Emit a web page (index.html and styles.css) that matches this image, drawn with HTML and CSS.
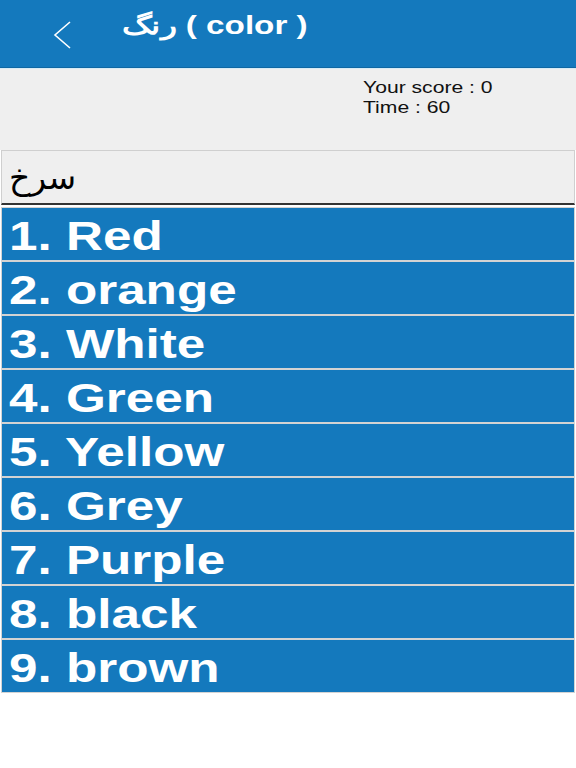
FILE: index.html
```html
<!DOCTYPE html>
<html>
<head>
<meta charset="utf-8">
<link rel="stylesheet" href="styles.css">
</head>
<body>
<div class="header">
  <svg class="back" width="24" height="32" viewBox="0 0 24 32"><polyline points="19,2 4,15 19,28" fill="none" stroke="#fff" stroke-width="1.6"/></svg>
  <div class="title"><span class="wide">رنگ ( color )</span></div>
</div>
<div class="info">
  <div class="score"><span class="wide">Your score : 0</span><br><span class="wide">Time : 60</span></div>
</div>
<div class="word"><span class="fa">سرخ</span></div>
<div class="list">
  <div class="item"><span class="wide">1. Red</span></div>
  <div class="item"><span class="wide">2. orange</span></div>
  <div class="item"><span class="wide">3. White</span></div>
  <div class="item"><span class="wide">4. Green</span></div>
  <div class="item"><span class="wide">5. Yellow</span></div>
  <div class="item"><span class="wide">6. Grey</span></div>
  <div class="item"><span class="wide">7. Purple</span></div>
  <div class="item"><span class="wide">8. black</span></div>
  <div class="item"><span class="wide">9. brown</span></div>
</div>
</body>
</html>
```
FILE: styles.css
```css
body {
  margin: 0;
  background: #fff;
  font-family: "Liberation Sans", Arial, sans-serif;
}
.wide {
  display: inline-block;
  transform: scaleX(1.28);
  transform-origin: left center;
  white-space: nowrap;
}
.header {
  height: 67px;
  background: #1479bd;
  border-bottom: 1px solid #0e67a3;
  box-shadow: 0 1px 0 #d7ebf5;
  display: flex;
  align-items: flex-start;
  color: #fff;
}
.back {
  margin: 20px 0 0 51px;
}
.title {
  margin: 7px 0 0 47px;
  font-size: 25px;
  font-weight: bold;
  line-height: 36px;
}
.title .wide {
  transform: scaleX(1.33);
}
.info {
  height: 81px;
  margin-top: 1px;
  background: #efefef;
  box-sizing: border-box;
  padding: 8px 0 0 363px;
}
.score {
  font-size: 16.5px;
  line-height: 20px;
  color: #111;
}
.word {
  height: 52px;
  margin: 0 1px;
  background: #efefef;
  border: 1px solid #cfcfcf;
  border-bottom: 2px solid #333;
  padding-left: 7px;
  display: flex;
  align-items: center;
}
.fa {
  font-family: "DejaVu Sans", sans-serif;
  font-size: 33px;
  color: #000;
  line-height: 44px;
  margin-top: 2px;
}
.list {
  margin-top: 2px;
  padding: 0 1px;
  display: flex;
  flex-direction: column;
}
.item {
  height: 52px;
  background: #1479bd;
  border: 1px solid #d3d3d3;
  color: #fff;
  font-size: 40px;
  font-weight: bold;
  padding-left: 7px;
  display: flex;
  align-items: center;
  line-height: 46px;
}
.item .wide {
  margin-top: 4px;
}
```
